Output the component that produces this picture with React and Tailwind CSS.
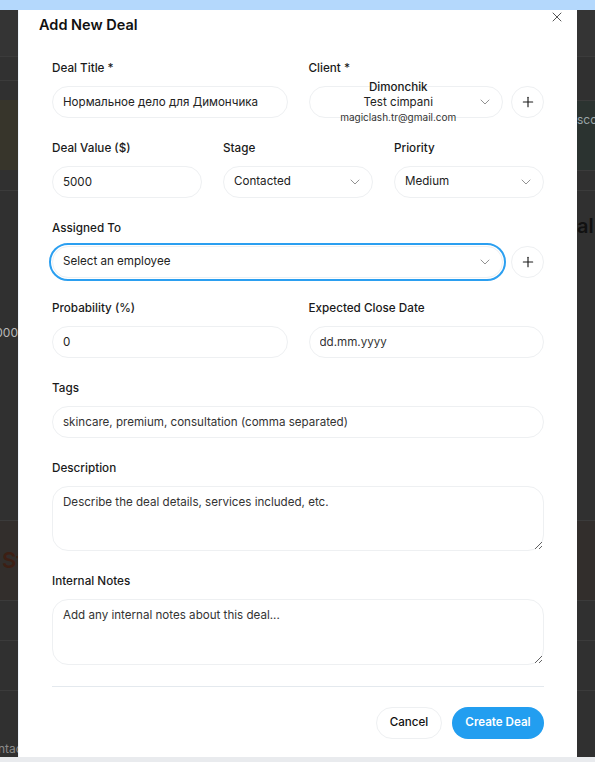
import { ChevronDown, Plus, X } from 'lucide-react';

const inputCls =
    'h-8 w-full rounded-full border border-[#eef0f2] bg-white px-[10px] text-[11.6px] text-[#222] outline-none placeholder:text-[#333]';

const areaCls =
    'block w-full rounded-2xl border border-[#eef0f2] px-[10px] py-[7px] text-[11.6px] leading-4 text-[#222] outline-none placeholder:text-[#333]';

function Label({ children }) {
    return <div className="mb-[10px] h-4 text-[11.7px] font-medium leading-4 text-[#1a1a1a]">{children}</div>;
}

function Select({ children, focused, className = '' }) {
    return (
        <div
            className={`flex h-8 items-center rounded-full border border-[#eef0f2] bg-white pl-[10px] pr-[9px] text-[11.6px] text-[#222]
                ${focused ? 'outline-2 outline-offset-1 outline-[#2b9ff0]' : ''} ${className}`}
        >
            <div className="min-w-0 flex-1">{children}</div>
            <ChevronDown size={16} strokeWidth={1.4} className="shrink-0 text-[#8a8a8a]" />
        </div>
    );
}

function AddButton() {
    return (
        <button
            type="button"
            className="flex h-8 w-[33px] shrink-0 items-center justify-center rounded-full border border-[#eef0f2] bg-white text-[#1a1a1a]"
        >
            <Plus size={16} strokeWidth={1.7} />
        </button>
    );
}

function Band({ h, bg, line, children, align = 'justify-end' }) {
    return (
        <div
            className={`flex shrink-0 items-center overflow-hidden whitespace-nowrap ${align} ${line ? 'border-t border-[#3b3b3b]' : ''}`}
            style={{ height: h, background: bg }}
        >
            {children}
        </div>
    );
}

export default function App() {
    return (
        <div className="flex h-[762px] w-full flex-col overflow-hidden bg-[#303030] font-['Inter','Noto_Sans',sans-serif]">
            {/* top browser strip */}
            <div className="h-[10px] shrink-0 bg-[#b4d8fc]" />

            <div className="flex min-h-0 flex-1">
                {/* page behind the overlay, left */}
                <div className="flex w-[18px] shrink-0 flex-col">
                    <Band h={46} bg="#343434" />
                    <Band h={24} bg="#313131" line />
                    <Band h={20} bg="#303030" line />
                    <Band h={70} bg="#37352b" />
                    <Band h={20} bg="#303030" />
                    <Band h={130} bg="#303030" line />
                    <Band h={26} bg="#303030">
                        <span className="text-[12px] text-[#b8b8b8]">000</span>
                    </Band>
                    <Band h={174} bg="#303030" />
                    <Band h={80} bg="#322e2c" line align="justify-start">
                        <span className="pl-[2px] text-[22px] font-semibold text-[#3d1f14]">St</span>
                    </Band>
                    <Band h={40} bg="#303030" line />
                    <Band h={50} bg="#303030" line />
                    <Band h={50} bg="#303030" line />
                    <Band h={17} bg="#303030" align="justify-start">
                        <span className="-ml-[2px] text-[12px] text-[#8a8a8a]">ntac</span>
                    </Band>
                </div>

                {/* modal */}
                <div className="relative w-[559px] shrink-0 border-l border-[#eef4fb] bg-white pt-[5px]">
                    <button type="button" className="absolute right-[12px] top-[-1px] text-[#555]">
                        <X size={16} strokeWidth={1.5} />
                    </button>

                    <h2 className="h-5 pl-[20px] text-[14.5px] font-semibold leading-5 text-[#111]">Add New Deal</h2>

                    <div className="mt-[25px] flex flex-col gap-y-[22px] px-[33px]">
                        <div className="grid grid-cols-2 gap-x-[21px]">
                            <div>
                                <Label>Deal Title *</Label>
                                <input className={inputCls} defaultValue="Нормальное дело для Димончика" />
                            </div>
                            <div>
                                <Label>Client *</Label>
                                <div className="flex gap-2">
                                    <Select className="flex-1">
                                        <div className="flex flex-col items-center text-center">
                                            <span className="text-[11.6px] font-medium leading-[16px] text-[#1a1a1a]">Dimonchik</span>
                                            <span className="text-[11.6px] leading-[15px] text-[#222]">Test cimpani</span>
                                            <span className="text-[10px] leading-[15px] text-[#333]">magiclash.tr@gmail.com</span>
                                        </div>
                                    </Select>
                                    <AddButton />
                                </div>
                            </div>
                        </div>

                        <div className="grid grid-cols-3 gap-x-[21px]">
                            <div>
                                <Label>Deal Value ($)</Label>
                                <input className={inputCls} defaultValue="5000" />
                            </div>
                            <div>
                                <Label>Stage</Label>
                                <Select>Contacted</Select>
                            </div>
                            <div>
                                <Label>Priority</Label>
                                <Select>Medium</Select>
                            </div>
                        </div>

                        <div>
                            <Label>Assigned To</Label>
                            <div className="flex items-center gap-2">
                                <Select focused className="flex-1">Select an employee</Select>
                                <AddButton />
                            </div>
                        </div>

                        <div className="grid grid-cols-2 gap-x-[21px]">
                            <div>
                                <Label>Probability (%)</Label>
                                <input className={inputCls} defaultValue="0" />
                            </div>
                            <div>
                                <Label>Expected Close Date</Label>
                                <input className={inputCls} placeholder="dd.mm.yyyy" />
                            </div>
                        </div>

                        <div>
                            <Label>Tags</Label>
                            <input className={inputCls} placeholder="skincare, premium, consultation (comma separated)" />
                        </div>

                        <div>
                            <Label>Description</Label>
                            <textarea
                                className={`${areaCls} h-[65px]`}
                                placeholder="Describe the deal details, services included, etc."
                            />
                        </div>

                        <div>
                            <Label>Internal Notes</Label>
                            <textarea
                                className={`${areaCls} h-[66px]`}
                                placeholder="Add any internal notes about this deal..."
                            />
                        </div>
                    </div>

                    <div className="mx-[33px] mt-[21px] h-px bg-[#e4e9ee]" />

                    <div className="flex justify-end gap-[10px] px-[33px] pt-[20px]">
                        <button
                            type="button"
                            className="h-8 w-[66px] rounded-full border border-[#eef0f2] bg-white text-[11.6px] font-medium text-[#111]"
                        >
                            Cancel
                        </button>
                        <button
                            type="button"
                            className="h-8 w-[92px] rounded-full bg-[#229ef0] text-[11.6px] font-semibold text-white"
                        >
                            Create Deal
                        </button>
                    </div>
                </div>

                {/* page behind the overlay, right */}
                <div className="flex w-[18px] shrink-0 flex-col">
                    <Band h={46} bg="#343434" />
                    <Band h={44} bg="#303030" line />
                    <Band h={70} bg="#2b3330" line align="justify-start">
                        <span className="-mt-[32px] text-[12px] text-[#9aa4a8]">sco</span>
                    </Band>
                    <Band h={20} bg="#303030" line />
                    <Band h={70} bg="#303030" line align="justify-start">
                        <span className="text-[20px] font-semibold text-[#111]">al</span>
                    </Band>
                    <Band h={260} bg="#303030" />
                    <Band h={80} bg="#322e2c" line />
                    <Band h={40} bg="#303030" line />
                    <Band h={50} bg="#303030" line />
                    <Band h={50} bg="#303030" line />
                    <Band h={17} bg="#303030" />
                </div>
            </div>

            {/* bottom strip */}
            <div className="h-[5px] shrink-0 bg-[#e9ebee]" />
        </div>
    );
}
